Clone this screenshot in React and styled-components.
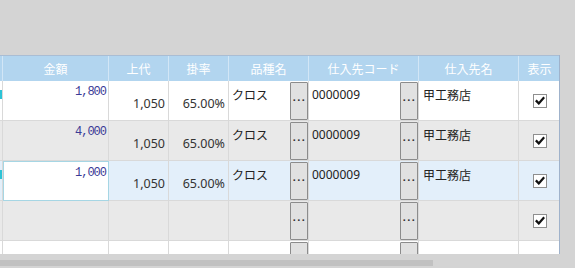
import React from "react";
import styled, { createGlobalStyle } from "styled-components";

const GlobalStyle = createGlobalStyle`
  html, body { margin: 0; padding: 0; }
  body {
    background: #d4d4d4;
    font-family: "Noto Sans", "Noto Sans CJK JP", sans-serif;
  }
`;

const COLS = "3px 106px 60px 60px 80px 110px 100px 41px";

const rows = [
  { bg: "#ffffff", kingaku: "1,800", jodai: "1,050", rate: "65.00%", hinshu: "クロス", code: "0000009", name: "甲工務店", marker: true },
  { bg: "#e9e9e9", kingaku: "4,000", jodai: "1,050", rate: "65.00%", hinshu: "クロス", code: "0000009", name: "甲工務店" },
  { bg: "#e3effa", kingaku: "1,000", jodai: "1,050", rate: "65.00%", hinshu: "クロス", code: "0000009", name: "甲工務店", marker: true, editing: true },
  { bg: "#e9e9e9" },
  { bg: "#ffffff", empty: true },
];

const App = () => {
  return (
    <>
      <GlobalStyle />
      <Page>
        <TopSpace />
        <GridFrame>
          <HeaderRow>
            <HeadCell />
            <HeadCell>金額</HeadCell>
            <HeadCell>上代</HeadCell>
            <HeadCell>掛率</HeadCell>
            <HeadCell>品種名</HeadCell>
            <HeadCell>仕入先コード</HeadCell>
            <HeadCell>仕入先名</HeadCell>
            <HeadCell>表示</HeadCell>
          </HeaderRow>
          {rows.map((r, i) => (
            <Row key={i} $bg={r.bg}>
              <Cell>{r.marker && <Marker />}</Cell>
              <AmountCell $editing={r.editing}>{r.kingaku}</AmountCell>
              <NumCell>{r.jodai}</NumCell>
              <NumCell>{r.rate}</NumCell>
              <PickCell>
                <PickText>{r.hinshu}</PickText>
                <DotsButton>{!r.empty && "..."}</DotsButton>
              </PickCell>
              <PickCell>
                <PickText>{r.code}</PickText>
                <DotsButton>{!r.empty && "..."}</DotsButton>
              </PickCell>
              <TextCell>{r.name}</TextCell>
              <CheckCell>{!r.empty && <Check />}</CheckCell>
            </Row>
          ))}
        </GridFrame>
        <ScrollTrack>
          <Thumb />
        </ScrollTrack>
      </Page>
    </>
  );
};

const Check = () => (
  <CheckBox>
    <svg width="10" height="9" viewBox="0 0 10 9">
      <path d="M0.8 4.4 L3.8 7.4 L9.2 1.2" fill="none" stroke="#111" strokeWidth="2.3" />
    </svg>
  </CheckBox>
);

const Page = styled.div`
  width: 575px;
  height: 268px;
  overflow: hidden;
  background: #d4d4d4;
`;

const TopSpace = styled.div`
  height: 55px;
`;

const GridFrame = styled.div`
  width: 560px;
  height: 199px;
  overflow: hidden;
  border-right: 1px solid #9fb2cb;
  box-sizing: border-box;
  background: #ffffff;
`;

const HeaderRow = styled.div`
  display: grid;
  grid-template-columns: ${COLS};
  height: 26px;
  box-sizing: border-box;
  border-top: 1px solid #a9bdd4;
  background: #b2d5ef;
`;

const HeadCell = styled.div`
  display: flex;
  align-items: center;
  justify-content: center;
  border-right: 1px solid #d2e6f6;
  color: #ffffff;
  font-size: 12px;
  &:last-child { border-right: none; }
`;

const Row = styled.div`
  display: grid;
  grid-template-columns: ${COLS};
  height: 40px;
  box-sizing: border-box;
  border-bottom: 1px solid #d9d9d9;
  background: ${(p) => p.$bg};
  font-size: 12px;
  color: #333;
`;

const Cell = styled.div`
  border-right: 1px solid #d9d9d9;
  box-sizing: border-box;
  min-width: 0;
  &:last-child { border-right: none; }
`;

const Marker = styled.div`
  width: 2px;
  height: 9px;
  margin-top: 9px;
  background: #2cc3d6;
`;

const AmountCell = styled(Cell)`
  text-align: right;
  padding: 4px 2px 0 0;
  font-family: "Liberation Mono", "DejaVu Sans Mono", monospace;
  font-size: 12px;
  letter-spacing: -1px;
  color: #3a3a96;
  background: ${(p) => (p.$editing ? "#ffffff" : "transparent")};
  border: ${(p) => (p.$editing ? "1px solid #a6d6e4" : "none")};
  border-right: 1px solid ${(p) => (p.$editing ? "#a6d6e4" : "#d9d9d9")};
  margin-bottom: ${(p) => (p.$editing ? "-1px" : "0")};
`;

const NumCell = styled(Cell)`
  display: flex;
  align-items: center;
  justify-content: flex-end;
  padding: 6px 3px 0 0;
  font-size: 12.5px;
  color: #333;
`;

const PickCell = styled(Cell)`
  display: flex;
  align-items: stretch;
`;

const PickText = styled.div`
  flex: 1;
  padding: 5px 0 0 3px;
  font-size: 12px;
  color: #222;
`;

const DotsButton = styled.div`
  width: 18px;
  margin: 1px 0 0 0;
  box-sizing: border-box;
  border: 1px solid #8c8c8c;
  border-radius: 1px;
  background: #e1e1e1;
  display: flex;
  align-items: center;
  justify-content: center;
  padding: 0 0 8px 1px;
  font-family: "Liberation Sans", sans-serif;
  font-size: 11px;
  font-weight: bold;
  letter-spacing: 1.5px;
  color: #333;
`;

const TextCell = styled(Cell)`
  padding: 5px 0 0 4px;
  font-size: 12px;
  color: #222;
`;

const CheckCell = styled(Cell)`
  display: flex;
  align-items: center;
  justify-content: center;
`;

const CheckBox = styled.div`
  width: 14px;
  height: 14px;
  box-sizing: border-box;
  border: 1px solid #8e8e8e;
  background: #ffffff;
  display: flex;
  align-items: center;
  justify-content: center;
`;

const ScrollTrack = styled.div`
  height: 14px;
  padding-top: 6px;
  box-sizing: border-box;
`;

const Thumb = styled.div`
  width: 433px;
  height: 6px;
  background: #c1c1c1;
`;

export default App;
